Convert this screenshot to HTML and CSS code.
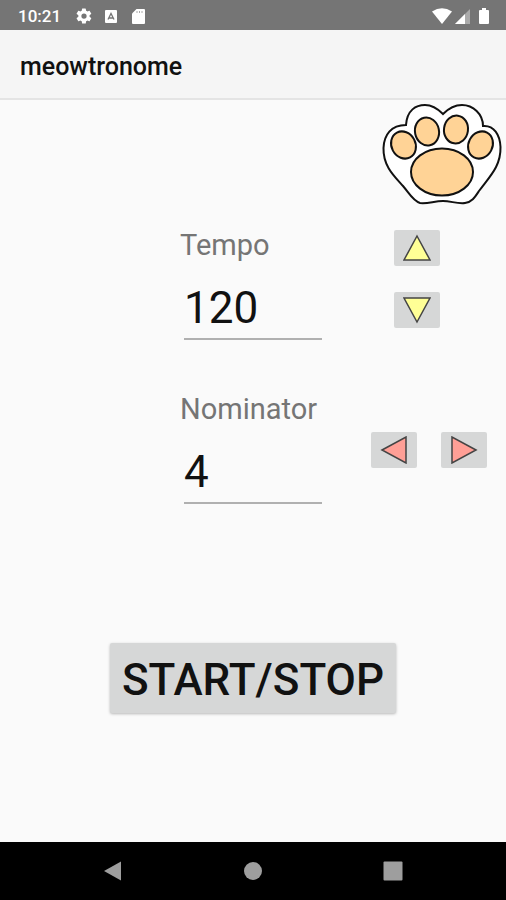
FILE: index.html
```html
<!DOCTYPE html>
<html lang="en">
<head>
<meta charset="utf-8">
<meta name="viewport" content="width=device-width, initial-scale=1">
<title>meowtronome</title>
<link rel="stylesheet" href="styles.css">
</head>
<body>
<div class="status">
  <span class="clock">10:21</span>
  <svg class="gear" width="18" height="18" viewBox="0 0 24 24"><path d="M19.4 13a7.5 7.5 0 0 0 0-2l2.1-1.6a.5.5 0 0 0 .1-.7l-2-3.4a.5.5 0 0 0-.6-.2l-2.500 1a7.300 7.300 0 0 0-1.700-1l-.4-2.600a.5.5 0 0 0-.5-.5h-4a.5.5 0 0 0-.5.4L9 5.100a7.300 7.300 0 0 0-1.700 1l-2.500-1a.5.5 0 0 0-.6.2l-2 3.400a.5.5 0 0 0 .1.700L4.500 11a7.500 7.500 0 0 0 0 2l-2.200 1.600a.5.5 0 0 0-.1.700l2 3.400c.1.200.4.300.6.200l2.500-1a7.300 7.300 0 0 0 1.700 1l.4 2.600c0 .3.200.5.500.5h4c.3 0 .5-.2.500-.5l.4-2.600a7.300 7.300 0 0 0 1.700-1l2.500 1c.2.100.5 0 .6-.2l2-3.400a.5.5 0 0 0-.1-.7zM12 15.500a3.500 3.500 0 1 1 0-7 3.500 3.500 0 0 1 0 7z" fill="#fff"/></svg>
  <svg width="12" height="13" viewBox="0 0 12 13"><rect width="12" height="13" rx="1" fill="#fff"/><path d="M3 9.500 6 3.500l3 6M4 8h4" fill="none" stroke="#757575" stroke-width="1.300"/></svg>
  <svg class="card" width="13" height="15" viewBox="0 0 13 15"><path d="M4.500 0H12q1 0 1 1v13q0 1-1 1H1q-1 0-1-1V4.500z" fill="#fff"/><path d="M5 2v2M7.500 2v2M10 2v2" stroke="#aaa"/></svg>
  <svg class="wifi" width="20" height="16" viewBox="0 0 20 16"><path d="M0 3.500Q10-3 20 3.500L10 16z" fill="#fff"/></svg>
  <svg width="15" height="15" viewBox="0 0 15 15"><path d="M15 0v15H0z" fill="#aaa"/><path d="M10 5v10H0z" fill="#fff"/></svg>
  <svg class="battery" width="10" height="16" viewBox="0 0 10 16"><path d="M3 0h4v2h2q1 0 1 1v12q0 1-1 1H1q-1 0-1-1V3q0-1 1-1h2z" fill="#fff"/></svg>
</div>
<header class="appbar"><h1>meowtronome</h1></header>
<main>
  <svg class="paw" viewBox="0 0 120 102" role="img" aria-label="Cat paw" stroke="#111" stroke-width="2">
    <path d="M24 22C25 7 34 2 43 2C50 2 56 6 61 11C66 6 73 2 80 2C91 2 101 11 101 23C112 22 118 32 118.500 44C119 63 108 73 97 88C93 94 90 99 83 100C75 101 69 98 61 98C52 98 46 101 38 100C31 98 27 90 21 83C12 73 1 63 1.500 45C2 32 9 22 24 22Z" fill="#fff"/>
    <g fill="#ffd396">
      <ellipse cx="21.500" cy="42" rx="12" ry="14" transform="rotate(-28 21.500 42)"/>
      <ellipse cx="45" cy="28.500" rx="12" ry="14" transform="rotate(-12 45 28.500)"/>
      <ellipse cx="74" cy="26.500" rx="12" ry="14" transform="rotate(8 74 26.500)"/>
      <ellipse cx="98.500" cy="42" rx="12" ry="14" transform="rotate(28 98.500 42)"/>
      <ellipse cx="60" cy="69" rx="31" ry="23.500"/>
    </g>
  </svg>
  <section class="row">
    <div class="field">
      <label for="tempo">Tempo</label>
      <input id="tempo" type="text" inputmode="numeric" value="120">
    </div>
    <div class="steps vertical">
      <button type="button" aria-label="Increase tempo"><svg width="28" height="28" viewBox="0 0 28 28"><path d="M14 2 27 26H1z" fill="#ffff96"/></svg></button>
      <button type="button" aria-label="Decrease tempo"><svg width="28" height="28" viewBox="0 0 28 28"><path d="M14 26 27 2H1z" fill="#ffff96"/></svg></button>
    </div>
  </section>
  <section class="row">
    <div class="field">
      <label for="nominator">Nominator</label>
      <input id="nominator" type="text" inputmode="numeric" value="4">
    </div>
    <div class="steps horizontal">
      <button type="button" aria-label="Decrease nominator"><svg width="28" height="28" viewBox="0 0 28 28"><path d="M2 14 26 1v26z" fill="#ff9f96"/></svg></button>
      <button type="button" aria-label="Increase nominator"><svg width="28" height="28" viewBox="0 0 28 28"><path d="M26 14 2 1v26z" fill="#ff9f96"/></svg></button>
    </div>
  </section>
  <button class="start" type="button">START/STOP</button>
</main>
<nav class="navbar" aria-label="System">
  <button type="button" aria-label="Back"><svg width="20" height="20" viewBox="0 0 20 20"><path d="M1 10 18 0.500v19z"/></svg></button>
  <button type="button" aria-label="Home"><svg width="20" height="20" viewBox="0 0 20 20"><circle cx="10" cy="10" r="9"/></svg></button>
  <button type="button" aria-label="Recent apps"><svg width="20" height="20" viewBox="0 0 20 20"><rect x="0.500" y="0.500" width="19" height="19" rx="1"/></svg></button>
</nav>
</body>
</html>
```
FILE: styles.css
```css
* {
  box-sizing: border-box;
}

body {
  margin: 0;
  min-height: 100vh;
  display: flex;
  flex-direction: column;
  background: #fafafa;
  color: #111;
  font-family: Roboto, "Liberation Sans", sans-serif;
}

svg {
  display: block;
  flex: none;
}

button {
  padding: 0;
  border: 0;
  font: inherit;
  color: inherit;
}

.status {
  height: 30px;
  padding: 2px 17px 0 18px;
  display: flex;
  align-items: center;
  background: #757575;
  color: #fff;
}

.clock {
  font-size: 17px;
  font-weight: 500;
}

.gear {
  margin: 0 12px 0 14px;
}

.card {
  margin-left: 15px;
}

.wifi {
  margin: 0 3px 0 auto;
}

.battery {
  margin-left: 9px;
}

.appbar {
  height: 70px;
  padding: 4px 20px 0;
  display: flex;
  align-items: center;
  background: #f5f5f5;
  border-bottom: 2px solid #e4e4e4;
}

h1 {
  margin: 0;
  font-size: 25px;
  font-weight: 500;
}

main {
  flex: 1;
  display: flex;
  flex-direction: column;
  padding: 3px 0 24px;
}

.paw {
  width: 120px;
  height: 102px;
  margin: 0 4px 23px 0;
  align-self: flex-end;
}

.row {
  display: grid;
  grid-template-columns: 1fr 148px 1fr;
  margin-bottom: 52px;
}

.field {
  grid-column: 2;
  display: flex;
  flex-direction: column;
}

label {
  padding-left: 1px;
  font-size: 29px;
  line-height: 34px;
  color: #757575;
}

input {
  width: 138px;
  height: 62px;
  margin: 16px 5px 0;
  padding: 0;
  border: 0;
  border-bottom: 2px solid #b0b0b0;
  background: none;
  font: inherit;
  font-size: 44px;
  color: #111;
}

.steps {
  display: flex;
}

.steps button {
  width: 46px;
  height: 36px;
  display: grid;
  place-items: center;
  border-radius: 2px;
  background: #d6d7d7;
}

.steps path {
  stroke: #444;
  stroke-width: 1.5;
}

.vertical {
  flex-direction: column;
  align-items: center;
  gap: 26px;
  padding-top: 2px;
}

.horizontal {
  justify-content: flex-end;
  gap: 24px;
  padding: 40px 19px 0 0;
}

.start {
  align-self: center;
  height: 70px;
  margin-top: 87px;
  padding: 4px 12px 0;
  border-radius: 2px;
  background: #d6d7d7;
  box-shadow: 0 1px 3px #0004;
  font-size: 44px;
  font-weight: 500;
}

.navbar {
  height: 58px;
  padding: 0 43px;
  display: flex;
  background: #000;
}

.navbar button {
  flex: 1;
  display: grid;
  place-items: center;
  background: none;
}

.navbar svg {
  fill: #9e9e9e;
}
```
